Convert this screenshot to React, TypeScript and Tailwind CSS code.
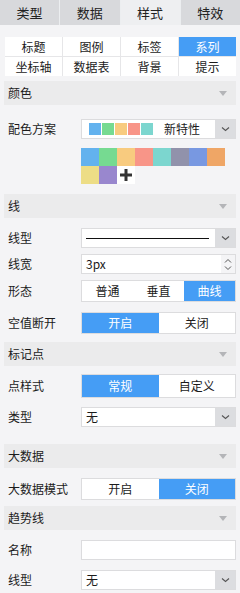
import React from 'react';

const FONT = { fontFamily: '"Noto Sans CJK SC", "Noto Sans", sans-serif' };

const palette = ['#63b2ee', '#76da91', '#f8cb7f', '#f89588', '#7cd6cf', '#9192ab', '#7898e1', '#efa666', '#eddd86', '#9987ce'];

const Chevron: React.FC = () => (
  <svg width="9" height="6" viewBox="0 0 9 6" fill="none">
    <path d="M1 1.5 L4.5 4.5 L8 1.5" stroke="#555" strokeWidth="1.1" />
  </svg>
);

const SectionHeader: React.FC<{ title: string; className?: string }> = ({ title, className = '' }) => (
  <div className={`mx-1 h-6 bg-[#ebebec] flex items-center justify-between pl-1 pr-[9px] ${className}`}>
    <span className="text-[12px] text-[#1b1b1b]">{title}</span>
    <svg width="8" height="5" viewBox="0 0 8 5">
      <path d="M0 0 H8 L4 5 Z" fill="#b4b5b8" />
    </svg>
  </div>
);

const Row: React.FC<{ label: string; className?: string; children: React.ReactNode }> = ({ label, className = '', children }) => (
  <div className={`flex items-center pl-2 pr-1 ${className}`}>
    <span className="w-[73px] shrink-0 text-[12px] text-[#1b1b1b]">{label}</span>
    <div className="flex-1">{children}</div>
  </div>
);

const Select: React.FC<{ children?: React.ReactNode }> = ({ children }) => (
  <div className="flex h-5 border border-[#dcdcde] bg-white">
    <div className="flex-1 flex items-center px-1 text-[12px] text-[#1b1b1b] overflow-hidden">{children}</div>
    <div className="w-5 bg-[#dcdde0] flex items-center justify-center">
      <Chevron />
    </div>
  </div>
);

const Segmented: React.FC<{ items: string[]; active: number; h?: string }> = ({ items, active, h = 'h-[22px]' }) => (
  <div className={`flex ${h} border border-[#dcdcde] bg-white`}>
    {items.map((it, i) => (
      <div
        key={it}
        className={`flex-1 flex items-center justify-center text-[12px] ${i === active ? 'bg-[#459df5] text-white' : 'text-[#1b1b1b]'}`}
      >
        {it}
      </div>
    ))}
  </div>
);

const App: React.FC = () => {
  const tabs = ['类型', '数据', '样式', '特效'];
  const subTabs = ['标题', '图例', '标签', '系列', '坐标轴', '数据表', '背景', '提示'];

  return (
    <div className="w-[240px] h-[593px] bg-[#f4f4f6] overflow-hidden" style={FONT}>
      {/* top tabs */}
      <div className="flex h-[25px] gap-px bg-[#eceef0]">
        {tabs.map((t, i) => (
          <div
            key={t}
            className={`flex-1 flex items-center justify-center text-[13px] text-[#222] ${i === 2 ? 'bg-[#eeeff1]' : 'bg-[#d8d9dc]'}`}
          >
            {t}
          </div>
        ))}
      </div>

      {/* sub tabs */}
      <div className="mx-[5px] mr-1 mt-3 grid grid-cols-4 gap-px bg-[#e6e6e8]">
        {subTabs.map((t, i) => (
          <div
            key={t}
            className={`h-[19px] flex items-center justify-center text-[12px] ${i === 3 ? 'bg-[#459df5] text-white' : 'bg-white text-[#1b1b1b]'}`}
          >
            {t}
          </div>
        ))}
      </div>

      <SectionHeader title="颜色" className="mt-[5px]" />

      <Row label="配色方案" className="mt-[14px]">
        <Select>
          <div className="flex gap-px pl-[3px]">
            {palette.slice(0, 5).map((c) => (
              <span key={c} className="w-3 h-3" style={{ background: c }} />
            ))}
          </div>
          <span className="ml-[11px]">新特性</span>
        </Select>
      </Row>

      <div className="ml-[81px] mt-[9px] flex flex-wrap w-[144px]">
        {palette.map((c) => (
          <span key={c} className="w-[18px] h-[18px]" style={{ background: c }} />
        ))}
        <span className="w-[18px] h-[18px] bg-white flex items-center justify-center">
          <svg width="12" height="12" viewBox="0 0 12 12">
            <path d="M6 0 V12 M0 6 H12" stroke="#333" strokeWidth="3" />
          </svg>
        </span>
      </div>

      <SectionHeader title="线" className="mt-[10px]" />

      <Row label="线型" className="mt-[10px]">
        <Select>
          <span className="block w-[123px] h-px bg-[#111]" />
        </Select>
      </Row>

      <Row label="线宽" className="mt-[6px]">
        <div className="flex h-5 border border-[#dcdcde] bg-white">
          <div className="flex-1 flex items-center px-1 text-[12px] text-[#1b1b1b]">3px</div>
          <div className="w-[14px] flex flex-col items-center justify-center gap-[3px] bg-[#f4f4f6]">
            <svg width="8" height="5" viewBox="0 0 8 5" fill="none">
              <path d="M1 4.5 L4 1.5 L7 4.5" stroke="#555" strokeWidth="1" />
            </svg>
            <svg width="8" height="5" viewBox="0 0 8 5" fill="none">
              <path d="M1 0.5 L4 3.5 L7 0.5" stroke="#555" strokeWidth="1" />
            </svg>
          </div>
        </div>
      </Row>

      <Row label="形态" className="mt-[6px]">
        <Segmented items={['普通', '垂直', '曲线']} active={2} />
      </Row>

      <Row label="空值断开" className="mt-[10px]">
        <Segmented items={['开启', '关闭']} active={0} />
      </Row>

      <SectionHeader title="标记点" className="mt-[8px]" />

      <Row label="点样式" className="mt-[8px]">
        <Segmented items={['常规', '自定义']} active={0} h="h-6" />
      </Row>

      <Row label="类型" className="mt-[9px]">
        <Select>无</Select>
      </Row>

      <SectionHeader title="大数据" className="mt-[17px]" />

      <Row label="大数据模式" className="mt-[10px]">
        <Segmented items={['开启', '关闭']} active={1} />
      </Row>

      <SectionHeader title="趋势线" className="mt-[6px]" />

      <Row label="名称" className="mt-[10px]">
        <div className="h-5 border border-[#dcdcde] bg-white" />
      </Row>

      <Row label="线型" className="mt-[10px]">
        <Select>无</Select>
      </Row>
    </div>
  );
};

export default App;
